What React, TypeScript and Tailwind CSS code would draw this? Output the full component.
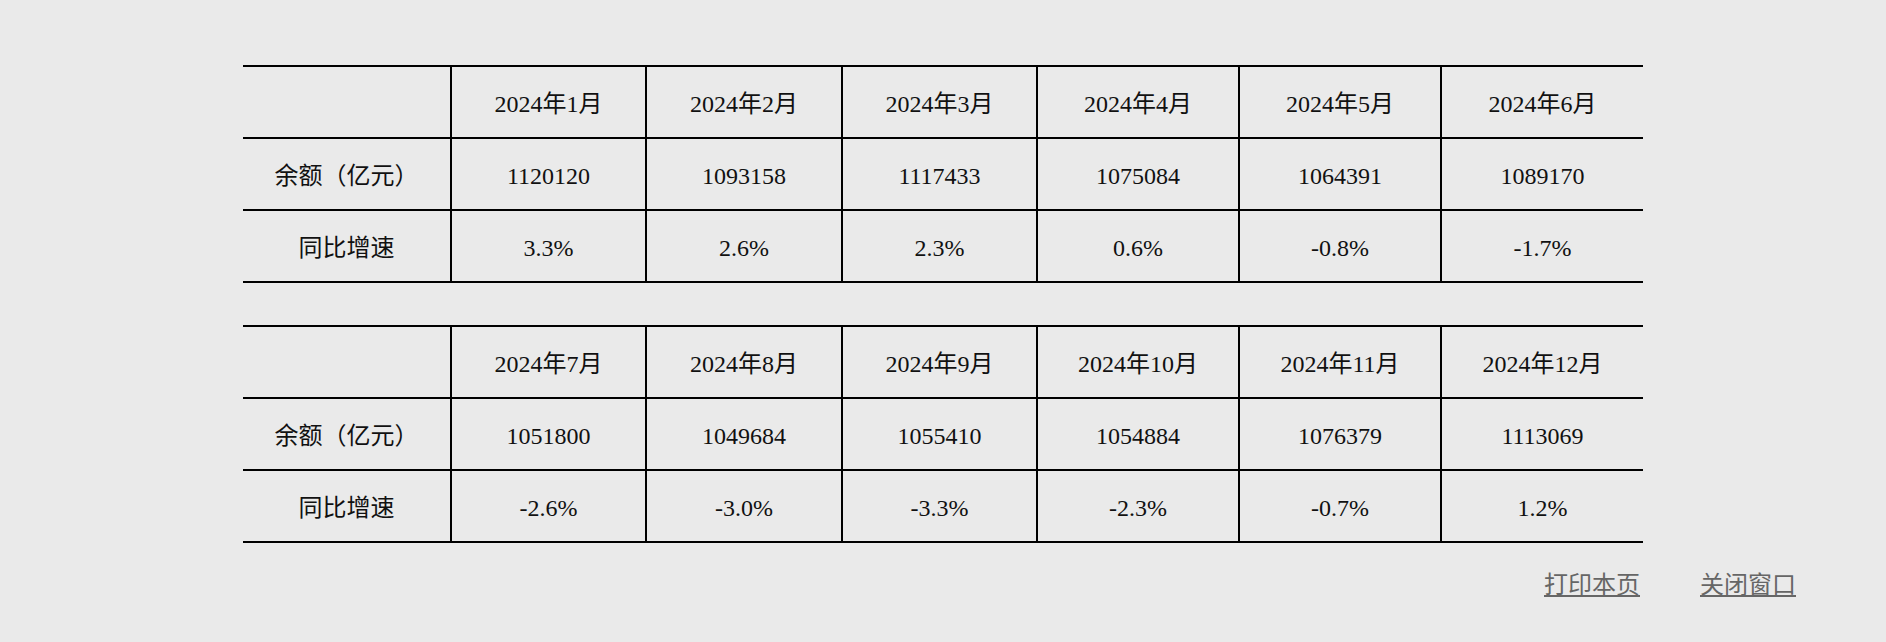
const tables = [
  {
    months: ["2024年1月", "2024年2月", "2024年3月", "2024年4月", "2024年5月", "2024年6月"],
    balance: ["1120120", "1093158", "1117433", "1075084", "1064391", "1089170"],
    growth: ["3.3%", "2.6%", "2.3%", "0.6%", "-0.8%", "-1.7%"],
  },
  {
    months: ["2024年7月", "2024年8月", "2024年9月", "2024年10月", "2024年11月", "2024年12月"],
    balance: ["1051800", "1049684", "1055410", "1054884", "1076379", "1113069"],
    growth: ["-2.6%", "-3.0%", "-3.3%", "-2.3%", "-0.7%", "1.2%"],
  },
];

function DataTable({ months, balance, growth }: { months: string[]; balance: string[]; growth: string[] }) {
  const rows = [
    { label: "", cells: months },
    { label: "余额（亿元）", cells: balance },
    { label: "同比增速", cells: growth },
  ];
  return (
    <table className="w-[1400px] mx-auto table-fixed border-collapse">
      <colgroup>
        <col className="w-[208px]" />
        <col className="w-[195px]" />
        <col className="w-[196px]" />
        <col className="w-[195px]" />
        <col className="w-[202px]" />
        <col className="w-[202px]" />
        <col className="w-[202px]" />
      </colgroup>
      <tbody>
        {rows.map((row, i) => (
          <tr key={i} className="h-[72px]">
            <td className="border-y-2 border-black pt-[4px] text-center">{row.label}</td>
            {row.cells.map((c) => (
              <td key={c} className="border-y-2 border-l-2 border-black pt-[4px] text-center">
                {c}
              </td>
            ))}
          </tr>
        ))}
      </tbody>
    </table>
  );
}

export default function App() {
  return (
    <div
      className="min-h-screen bg-[#eaeaea] pt-[65px] text-[24px] text-[#111]"
      style={{ fontFamily: '"Liberation Serif", "Noto Sans CJK SC", serif' }}
    >
      <DataTable {...tables[0]} />
      <div className="h-[42px]" />
      <DataTable {...tables[1]} />

      {/* Actions */}
      <div className="mt-[24px] flex justify-end gap-[60px] pr-[90px] leading-[36px] text-[#666]">
        <a href="#" className="underline underline-offset-2">打印本页</a>
        <a href="#" className="underline underline-offset-2">关闭窗口</a>
      </div>
    </div>
  );
}
